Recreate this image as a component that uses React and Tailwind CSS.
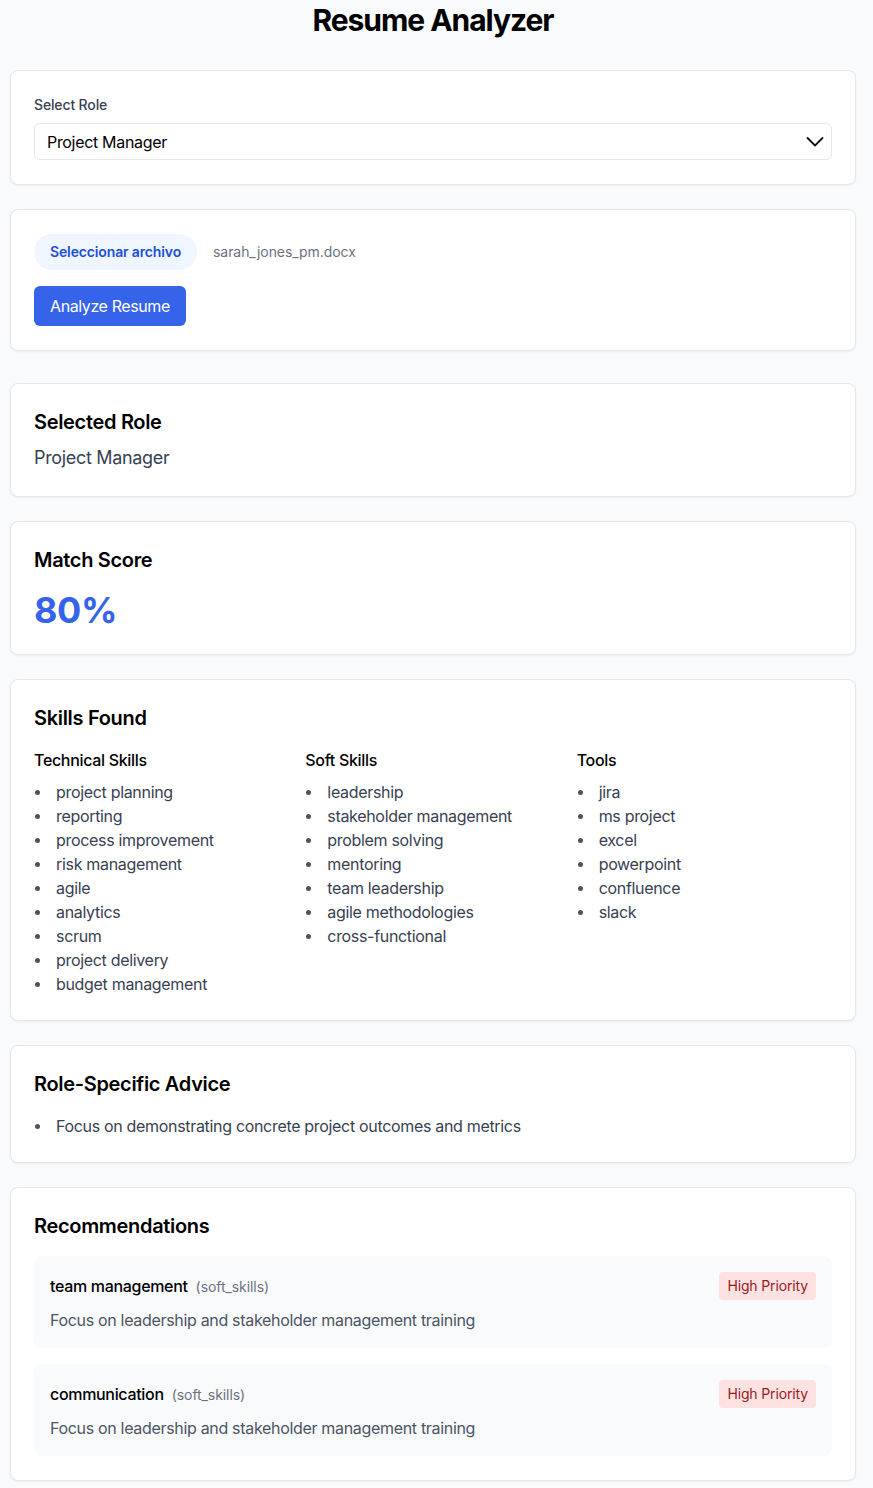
import { useState } from 'react';

const skills = {
  technical: [
    'project planning',
    'reporting',
    'process improvement',
    'risk management',
    'agile',
    'analytics',
    'scrum',
    'project delivery',
    'budget management',
  ],
  soft: [
    'leadership',
    'stakeholder management',
    'problem solving',
    'mentoring',
    'team leadership',
    'agile methodologies',
    'cross-functional',
  ],
  tools: ['jira', 'ms project', 'excel', 'powerpoint', 'confluence', 'slack'],
};

const recommendations = [
  {
    skill: 'team management',
    category: 'soft_skills',
    text: 'Focus on leadership and stakeholder management training',
  },
  {
    skill: 'communication',
    category: 'soft_skills',
    text: 'Focus on leadership and stakeholder management training',
  },
];

function Card({ children }) {
  return (
    <div className="rounded-lg border border-[#e5e7eb] bg-white px-[23px] py-6 shadow-[0_1px_2px_rgba(0,0,0,0.05)]">
      {children}
    </div>
  );
}

// custom bullet so the dot sits where the reference puts it
function Bullet({ children }) {
  return (
    <li className="flex items-center text-base leading-6 text-[#374151]">
      <span className="ml-[1px] mr-[16px] h-[5px] w-[5px] shrink-0 rounded-full bg-[#4b5563]" />
      <span>{children}</span>
    </li>
  );
}

function SkillList({ title, items }) {
  return (
    <div>
      <h3 className="mb-2 text-base font-medium leading-6 text-black">{title}</h3>
      <ul>
        {items.map((item) => (
          <Bullet key={item}>{item}</Bullet>
        ))}
      </ul>
    </div>
  );
}

export default function App() {
  const [role, setRole] = useState('Project Manager');

  return (
    <div className="min-h-screen bg-[#f9fafb] pl-[10px] pr-[17px] pb-2 font-['Inter',sans-serif] tracking-[-0.02em]">
      <h1 className="pt-[2px] pb-[32px] text-center text-[30px] font-bold leading-9 tracking-[-0.035em] text-black">
        Resume Analyzer
      </h1>

      <div className="flex flex-col gap-6">
        <Card>
          <label className="mb-2 block text-sm font-medium leading-5 tracking-[-0.01em] text-[#374151]">
            Select Role
          </label>
          <div className="relative">
            <select
              value={role}
              onChange={(e) => setRole(e.target.value)}
              className="h-[37px] w-full appearance-none rounded-md border border-[#e5e7eb] bg-white px-3 text-base tracking-[-0.02em] text-black outline-none"
            >
              <option>Project Manager</option>
              <option>Software Engineer</option>
              <option>Data Scientist</option>
            </select>
            <svg
              width="18"
              height="12"
              viewBox="0 0 18 12"
              fill="none"
              className="pointer-events-none absolute right-[8px] top-[13px]"
            >
              <path d="M1.5 2L9 9.5L16.5 2" stroke="#111" strokeWidth="1.8" strokeLinecap="round" strokeLinejoin="round" />
            </svg>
          </div>
        </Card>

        <Card>
          <div className="mb-4 flex items-center gap-4">
            <span className="rounded-full bg-[#eff6ff] px-4 py-2 text-sm font-semibold leading-5 tracking-[-0.01em] text-[#1d4ed8]">
              Seleccionar archivo
            </span>
            <span className="text-sm tracking-[-0.005em] text-[#6b7280]">sarah_jones_pm.docx</span>
          </div>
          <button className="h-10 rounded-md bg-[#3563e9] px-4 text-base tracking-[-0.025em] text-white">
            Analyze Resume
          </button>
        </Card>
      </div>

      <div className="mt-8 flex flex-col gap-6">
        <Card>
          <h2 className="mb-2 text-xl font-semibold leading-7 text-black">Selected Role</h2>
          <p className="text-lg leading-7 text-[#374151]">{role}</p>
        </Card>

        <Card>
          <h2 className="mb-4 text-xl font-semibold leading-7 text-black">Match Score</h2>
          <p className="text-4xl font-bold leading-10 text-[#3563e9]">80%</p>
        </Card>

        <Card>
          <h2 className="mb-4 text-xl font-semibold leading-7 text-black">Skills Found</h2>
          <div className="grid grid-cols-3 gap-4">
            <SkillList title="Technical Skills" items={skills.technical} />
            <SkillList title="Soft Skills" items={skills.soft} />
            <SkillList title="Tools" items={skills.tools} />
          </div>
        </Card>

        <Card>
          <h2 className="mb-4 text-xl font-semibold leading-7 text-black">Role-Specific Advice</h2>
          <ul>
            <Bullet>Focus on demonstrating concrete project outcomes and metrics</Bullet>
          </ul>
        </Card>

        <Card>
          <h2 className="mb-4 text-xl font-semibold leading-7 text-black">Recommendations</h2>
          <div className="flex flex-col gap-4">
            {recommendations.map((rec) => (
              <div key={rec.skill} className="rounded-lg bg-[#f9fafb] p-4">
                <div className="flex items-center justify-between">
                  <div className="flex items-baseline">
                    <span className="text-base font-medium text-black">{rec.skill}</span>
                    <span className="ml-2 text-sm tracking-[-0.005em] text-[#6b7280]">({rec.category})</span>
                  </div>
                  <span className="rounded bg-[#fee2e2] px-2 py-1 text-sm leading-5 tracking-[-0.01em] text-[#991b1b]">
                    High Priority
                  </span>
                </div>
                <p className="mt-2 text-base leading-6 text-[#4b5563]">{rec.text}</p>
              </div>
            ))}
          </div>
        </Card>
      </div>
    </div>
  );
}
